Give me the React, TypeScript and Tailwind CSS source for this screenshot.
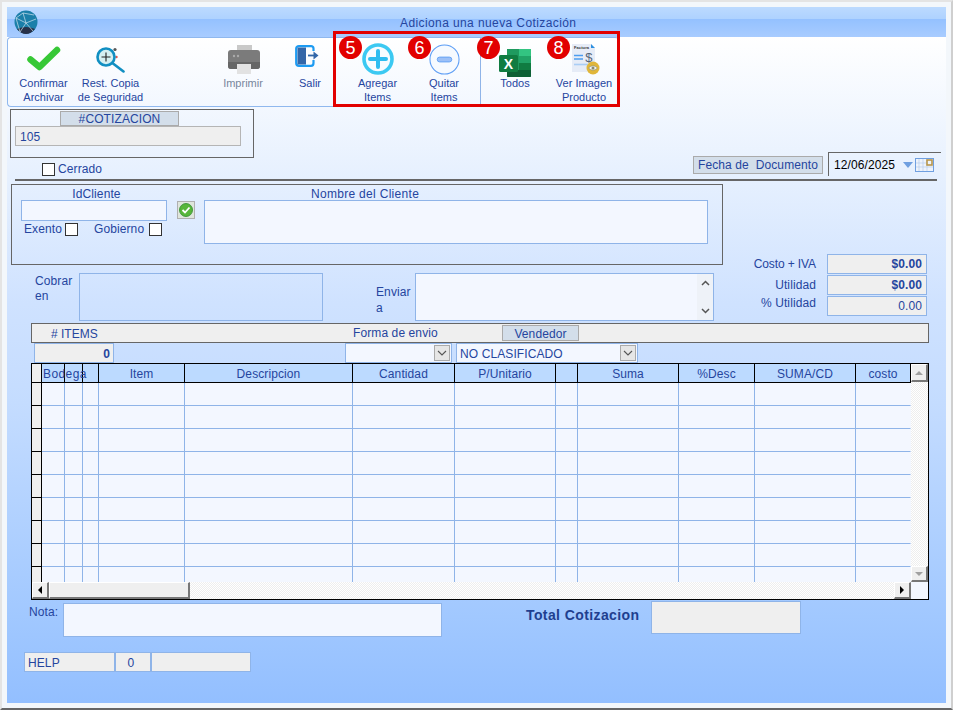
import type { ReactNode } from "react";

const columns = [
	{ w: "w-[10px]", label: "" },
	{ w: "w-[23px]", label: "Bodega" },
	{ w: "w-[18px]", label: "" },
	{ w: "w-[16px]", label: "" },
	{ w: "w-[86px]", label: "Item" },
	{ w: "w-[168px]", label: "Descripcion" },
	{ w: "w-[102px]", label: "Cantidad" },
	{ w: "w-[101px]", label: "P/Unitario" },
	{ w: "w-[22px]", label: "" },
	{ w: "w-[101px]", label: "Suma" },
	{ w: "w-[76px]", label: "%Desc" },
	{ w: "w-[101px]", label: "SUMA/CD" },
	{ w: "w-[55px]", label: "costo" },
];

const rows = [0, 1, 2, 3, 4, 5, 6, 7, 8];

function Logo() {
	return (
		<svg width="24" height="24" viewBox="0 0 24 24">
			<circle cx="12" cy="12" r="11.5" fill="#1b7fa9" />
			<path d="M3 19 Q12 15 21 19 Q17 24 12 24 Q7 24 3 19Z" fill="#27324a" />
			<path d="M2 8 L9 3 L20 5 M2 8 L12 13 L22 9 M9 3 L12 13 L6 22 M12 13 L19 21 M2 8 L6 22" stroke="#cfe3ee" strokeWidth="0.7" fill="none" />
		</svg>
	);
}

function CheckIcon() {
	return (
		<svg width="34" height="26" viewBox="0 0 34 26">
			<path d="M3.5 13.5 L12.5 21 L30 4" stroke="#37c837" strokeWidth="6.5" strokeLinecap="round" strokeLinejoin="round" fill="none" />
		</svg>
	);
}

function RestoreIcon() {
	return (
		<svg width="30" height="26" viewBox="0 0 30 26">
			<circle cx="19" cy="2.5" r="1.6" fill="#555" />
			<circle cx="20.5" cy="10" r="1.2" fill="#e0544c" />
			<circle cx="10" cy="10" r="8.5" fill="#d5f0f2" stroke="#118fc2" strokeWidth="2.6" />
			<path d="M17 16.5 L27.5 24.5" stroke="#118fc2" strokeWidth="2.6" strokeLinecap="round" />
			<path d="M10 5.5 V14.5 M5.5 10 H14.5" stroke="#222" strokeWidth="1.1" />
		</svg>
	);
}

function PrinterIcon() {
	return (
		<svg width="32" height="30" viewBox="0 0 32 30">
			<path d="M9 1 H24 V8 H9Z" fill="#c9c9c9" />
			<path d="M3 6 H29 Q32 6 32 9 V22 Q32 25 29 25 H3 Q0 25 0 22 V9 Q0 6 3 6Z" fill="#7b7b7b" />
			<path d="M0 18 H32 V22 Q32 25 29 25 H3 Q0 25 0 22Z" fill="#666" />
			<circle cx="6" cy="12" r="1.2" fill="#aaa" />
			<circle cx="10" cy="12" r="1.2" fill="#aaa" />
			<path d="M9 20 H23 V30 H9Z" fill="#e2e2e2" />
		</svg>
	);
}

function ExitIcon() {
	return (
		<svg width="24" height="22" viewBox="0 0 24 22">
			<path d="M18.5 6 V3.5 Q18.5 1.2 16 1.2 H4 Q1.2 1.2 1.2 3.5 V18 Q1.2 20.8 4 20.8 H16 Q18.5 20.8 18.5 18 V15" stroke="#1d9bf2" strokeWidth="2.2" fill="none" />
			<path d="M2.5 2.5 H11 V19.5 H2.5Z" fill="#3366a8" />
			<path d="M13 10.5 H19" stroke="#3366a8" strokeWidth="1.8" />
			<path d="M18.5 6.5 L23.5 10.5 L18.5 14.5Z" fill="#3366a8" />
		</svg>
	);
}

function PlusIcon() {
	return (
		<svg width="32" height="32" viewBox="0 0 32 32">
			<circle cx="16" cy="16" r="14" fill="#f8fcff" stroke="#3cc9f2" strokeWidth="3.6" />
			<path d="M16 8 V24 M8 16 H24" stroke="#2fbdf0" strokeWidth="4" strokeLinecap="round" />
		</svg>
	);
}

function MinusIcon() {
	return (
		<svg width="31" height="31" viewBox="0 0 32 32">
			<circle cx="16" cy="16" r="15" fill="#f6faff" stroke="#5c9df5" strokeWidth="1.1" />
			<rect x="8.5" y="13.5" width="15" height="5" rx="2.5" fill="#9cc0f7" stroke="#5c9df5" strokeWidth="0.9" />
		</svg>
	);
}

function ExcelIcon() {
	return (
		<svg width="33" height="30" viewBox="0 0 33 30">
			<path d="M8 1 H31 Q32 1 32 2 V28 Q32 29 31 29 H9 Q8 29 8 28Z" fill="#1f9a5f" />
			<path d="M20 1 H32 V8 H20Z" fill="#33c481" />
			<path d="M20 8 H32 V15 H20Z" fill="#21a366" />
			<path d="M20 15 H32 V22 H20Z" fill="#107c41" />
			<path d="M8 22 H32 V28 Q32 29 31 29 H9 Q8 29 8 28Z" fill="#0d5f35" />
			<rect x="0" y="7" width="19" height="17" rx="1.5" fill="#107c41" />
			<text x="9.5" y="20.5" textAnchor="middle" fontFamily="Liberation Sans, sans-serif" fontSize="14" fontWeight="700" fill="#fff">X</text>
		</svg>
	);
}

function InvoiceIcon() {
	return (
		<svg width="28" height="32" viewBox="0 0 28 32">
			<path d="M0 1 H19 L23 5 V29 H0Z" fill="#e6ecf7" />
			<path d="M19 1 L23 5 H19Z" fill="#2d8fe0" />
			<text x="2" y="5.5" fontFamily="Liberation Sans, sans-serif" fontSize="4" fontWeight="700" fill="#333">Factura</text>
			<text x="17" y="18.5" textAnchor="middle" fontFamily="Liberation Sans, sans-serif" fontSize="13" fill="#55657a">$</text>
			<path d="M2 12.5 H11 M2 16 H11" stroke="#4d9df0" strokeWidth="1.6" />
			<path d="M2 21.5 H16" stroke="#a9cdf5" strokeWidth="1.6" />
			<circle cx="21" cy="25" r="6.5" fill="#e0b63a" />
			<path d="M16.5 25 Q21 20.5 25.5 25 Q21 29.5 16.5 25Z" fill="#eef2f5" stroke="#8a8a6a" strokeWidth="0.6" />
			<circle cx="21" cy="25" r="1.5" fill="#8a8a6a" />
		</svg>
	);
}

function ToolButton({ icon, lines, className, iconClass, muted }: { icon?: ReactNode; lines: string[]; className: string; iconClass?: string; muted?: boolean }) {
	return (
		<div className={`flex flex-col items-center ${className}`}>
			<div className="flex h-[38px] items-start justify-center">
				<div className={iconClass}>{icon}</div>
			</div>
			{lines.map((l) => (
				<span key={l} className={`whitespace-nowrap text-[11px] leading-[14px] tracking-normal ${muted ? "text-[#77869c]" : "text-[#25459e]"}`}>
					{l}
				</span>
			))}
		</div>
	);
}

function Badge({ n, className }: { n: number; className: string }) {
	return (
		<div className={`absolute top-[34px] flex h-[23px] w-[23px] items-center justify-center rounded-full bg-[#e20000] text-[18px] leading-none text-white ${className}`}>
			{n}
		</div>
	);
}

function CheckBox() {
	return <span className="block h-[13px] w-[13px] shrink-0 border border-[#333] bg-white" />;
}

function Combo({ value, className }: { value?: string; className: string }) {
	return (
		<div className={`flex h-[20px] items-center justify-between border border-[#8fb4e8] bg-[#f3f7ff] pl-[3px] pr-[1px] text-[12px] text-[#25459e] ${className}`}>
			<span className="pt-px">{value}</span>
			<span className="flex h-[16px] w-[16px] items-center justify-center border border-[#aaa] bg-[#e6e6e6]">
				<svg width="10" height="6" viewBox="0 0 10 6">
					<path d="M1 1 L5 5 L9 1" stroke="#555" strokeWidth="1.1" fill="none" />
				</svg>
			</span>
		</div>
	);
}

const bevel = "h-full w-full border-b-2 border-l border-r-2 border-t border-b-[#777] border-l-white border-r-[#777] border-t-white bg-[#efefef]";

function ScrollButton({ dir }: { dir: "up" | "down" | "left" | "right" }) {
	const tri = {
		up: "M4 7 L8 3 L12 7Z",
		down: "M4 3 L8 7 L12 3Z",
		left: "M6 5 L10 1 L10 9Z",
		right: "M6 1 L10 5 L6 9Z",
	}[dir];
	const color = dir === "up" || dir === "down" ? "#a0a0a0" : "#000";
	return (
		<div className={`flex items-center justify-center ${bevel}`}>
			<svg width="14" height="10" viewBox="1 0 14 10">
				<path d={tri} fill={color} />
			</svg>
		</div>
	);
}

function Stat({ label, value, bold, labelClass }: { label: string; value: string; bold?: boolean; labelClass?: string }) {
	return (
		<div className="mb-px flex h-[20px] items-center justify-end gap-[11px]">
			<span className={`text-[12px] text-[#25459e] ${labelClass ?? ""}`}>{label}</span>
			<div className={`flex h-[20px] w-[100px] items-center justify-end border border-[#8fb4e8] bg-[#efefef] pr-[4px] text-[12px] text-[#25459e] ${bold ? "font-bold" : ""}`}>
				{value}
			</div>
		</div>
	);
}

export default function App() {
	return (
		<div className="relative h-[710px] w-[953px] overflow-hidden border-b-2 border-l-2 border-r-2 border-t-2 border-b-[#666] border-l-[#e4e4e4] border-r-[#cfcfcf] border-t-[#e4e4e4] bg-[#f3f7fb] p-[5px] font-['Liberation_Sans',sans-serif] tracking-[0.1px]">
			{/* barra de titulo */}
			<div className="flex h-[30px] bg-[linear-gradient(180deg,#bcdaff_0%,#aed2ff_40%,#94c1ff_40%,#a8ccff_100%)] pt-[3px]">
				<div className="ml-[7px]">
					<Logo />
				</div>
				<span className="ml-[362px] mt-[6px] text-[12px] leading-[14px] tracking-[0.4px] text-[#25459e]">Adiciona una nueva Cotización</span>
			</div>

			<div className="h-[666px] bg-[linear-gradient(180deg,#ffffff_0%,#e6f0fe_21%,#cfe2ff_40%,#c4dcff_55%,#a1c8ff_87%,#93bfff_100%)]">
				{/* toolbar */}
				<div className="flex h-[70px] w-[612px] rounded-[4px] border border-r-0 border-[#8fb8ee] pl-[2px]">
					<ToolButton className="w-[67px]" iconClass="mt-[8px]" icon={<CheckIcon />} lines={["Confirmar", "Archivar"]} />
					<ToolButton className="w-[67px]" iconClass="mt-[9px]" icon={<RestoreIcon />} lines={["Rest. Copia", "de Seguridad"]} />
					<div className="w-[66px]" />
					<ToolButton className="w-[66px]" iconClass="mt-[6px] ml-[2px]" icon={<PrinterIcon />} lines={["Imprimir"]} muted />
					<ToolButton className="w-[68px]" iconClass="mt-[7px] mr-[6px]" icon={<ExitIcon />} lines={["Salir"]} />
					<ToolButton className="w-[67px]" iconClass="mt-[5px]" icon={<PlusIcon />} lines={["Agregar", "Items"]} />
					<ToolButton className="w-[66px]" iconClass="mt-[6px]" icon={<MinusIcon />} lines={["Quitar", "Items"]} />
					<div className="ml-[3px] h-[67px] w-px bg-[#8fb4e8]" />
					<ToolButton className="w-[68px]" iconClass="mt-[10px]" icon={<ExcelIcon />} lines={["Todos"]} />
					<ToolButton className="w-[70px]" iconClass="mt-[5px] ml-[4px]" icon={<InvoiceIcon />} lines={["Ver Imagen", "Producto"]} />
				</div>

				{/* cotizacion / fecha */}
				<div className="flex items-end justify-between pl-[3px] pr-[5px]">
					<div>
						<div className="mt-[2px] h-[49px] w-[244px] border border-[#666]">
							<div className="ml-[49px] mt-px flex h-[15px] w-[119px] items-center justify-center border border-[#aaa] bg-[#d3deea] text-[12px] text-[#25459e]">#COTIZACION</div>
							<div className="ml-[4px] flex h-[20px] w-[226px] items-center border border-[#b5b5b5] bg-[#efefef] pl-[4px] pt-[2px] text-[12px] text-[#25459e]">105</div>
						</div>
						<div className="ml-[32px] mt-[4px] flex h-[14px] items-center gap-[3px]">
							<CheckBox />
							<span className="text-[12px] text-[#25459e]">Cerrado</span>
						</div>
					</div>
					<div className="flex items-end gap-[5px]">
						<div className="mb-[2px] flex h-[18px] w-[130px] items-center justify-center whitespace-pre border border-[#aaa] bg-[#d3deea] text-[12px] text-[#25459e]">Fecha de  Documento</div>
						<div className="flex h-[24px] w-[113px] items-center border-l border-t border-b-white border-r-white border-l-[#666] border-t-[#666] pl-[5px]">
							<span className="text-[12px] text-black">12/06/2025</span>
							<svg className="ml-[7px]" width="12" height="8" viewBox="0 0 12 8">
								<path d="M1 1 H11 L6 7Z" fill="#6f9fe0" />
							</svg>
							<svg className="ml-px" width="19" height="14" viewBox="0 0 19 14">
								<rect x="0.5" y="0.5" width="18" height="13" fill="#eef3fb" stroke="#6f9fe0" />
								<path d="M4 1 V13 M8 1 V13 M12 1 V13 M1 5 H18 M1 9 H18" stroke="#b8cdec" strokeWidth="0.7" />
								<rect x="12" y="2" width="5" height="5" fill="#eef3fb" stroke="#b8964a" strokeWidth="1.6" />
							</svg>
						</div>
					</div>
				</div>
				<div className="ml-[8px] mt-[3px] h-[2px] w-[922px] bg-[#666]" />

				{/* cliente + totales */}
				<div className="mt-[3px] flex">
					<div className="ml-[4px] w-[712px]">
						<div className="flex h-[81px] border border-[#666] pl-[9px]">
							<div className="w-[146px]">
								<div className="h-[15px] pl-[5px] text-center text-[12px] leading-[19px] text-[#25459e]">IdCliente</div>
								<div className="h-[21px] border border-[#8fb4e8] bg-[#f3f7ff]" />
								<div className="ml-[3px] mt-px flex h-[14px] items-center text-[12px] text-[#25459e]">
									<span className="w-[41px]">Exento</span>
									<CheckBox />
									<span className="ml-[16px] w-[55px]">Gobierno</span>
									<CheckBox />
								</div>
							</div>
							<div className="ml-[10px] mt-[16px] flex h-[18px] w-[18px] items-center justify-center border border-[#b0b0b0] bg-[#dfe6dc]">
								<svg width="14" height="14" viewBox="0 0 14 14">
									<circle cx="7" cy="7" r="6.5" fill="#57b63a" stroke="#2f8a2c" strokeWidth="0.8" />
									<path d="M3.5 7 L6 9.5 L10.5 4.5" stroke="#fff" strokeWidth="1.8" fill="none" />
								</svg>
							</div>
							<div className="ml-[9px] w-[504px]">
								<div className="h-[15px] pl-[107px] text-[12px] leading-[19px] tracking-[0.3px] text-[#25459e]">Nombre del Cliente</div>
								<div className="h-[44px] border border-[#8fb4e8] bg-[#f3f7ff]" />
							</div>
						</div>
						<div className="mt-[8px] flex">
							<div className="ml-[24px] w-[44px] pt-px text-[12px] leading-[15px] text-[#25459e]">
								Cobrar
								<br />
								en
							</div>
							<div className="h-[48px] w-[244px] border border-[#8fb4e8]" />
							<div className="ml-[53px] w-[39px] pt-[11px] text-[12px] leading-[16px] text-[#25459e]">
								Enviar
								<br />a
							</div>
							<div className="flex h-[48px] w-[299px] justify-end border border-[#8fb4e8] bg-[#f3f7ff]">
								<div className="flex w-[16px] flex-col items-center justify-between bg-[#eef2f8] py-[6px]">
									<svg width="9" height="6" viewBox="0 0 9 6">
										<path d="M1 5 L4.5 1.5 L8 5" stroke="#555" strokeWidth="1.5" fill="none" />
									</svg>
									<svg width="9" height="6" viewBox="0 0 9 6">
										<path d="M1 1 L4.5 4.5 L8 1" stroke="#555" strokeWidth="1.5" fill="none" />
									</svg>
								</div>
							</div>
						</div>
					</div>
					<div className="mt-[70px] w-[204px]">
						<Stat label="Costo + IVA" value="$0.00" bold labelClass="tracking-[-0.1px]" />
						<Stat label="Utilidad" value="$0.00" bold />
						<Stat label="% Utilidad" value="0.00" labelClass="mb-[6px]" />
					</div>
				</div>

				{/* items */}
				<div className="ml-[24px] mt-[2px] flex h-[20px] w-[898px] items-center border border-[#666] bg-[#efefef] text-[12px] text-[#25459e]">
					<span className="w-[321px] pl-[19px] pt-px tracking-normal"># ITEMS</span>
					<span className="w-[149px]">Forma de envio</span>
					<span className="flex h-[16px] w-[77px] items-center justify-center border border-[#aaa] bg-[#d3deea] pt-px">Vendedor</span>
				</div>
				<div className="ml-[27px] flex h-[20px]">
					<div className="flex w-[80px] items-center justify-end border border-[#8fb4e8] bg-[#efefef] pr-[3px] pt-px text-[12px] font-bold text-[#25459e]">0</div>
					<Combo className="ml-[231px] w-[107px]" />
					<Combo className="ml-[4px] w-[182px]" value="NO CLASIFICADO" />
				</div>

				{/* grilla */}
				<div className="ml-[24px] h-[237px] w-[898px] border border-black bg-[#f3f7ff]">
					<div className="flex h-[218px]">
						<div className="w-[879px] overflow-hidden">
							<div className="flex h-[19px]">
								{columns.map((c, i) => (
									<div
										key={i}
										className={`flex shrink-0 items-center whitespace-nowrap border-b border-r border-black pt-[2px] text-[12px] text-[#25459e] ${c.w} ${i === 0 ? "bg-[#efefef]" : "bg-[#bcdaff]"} ${i === 1 ? "relative z-10 justify-start pl-px tracking-[0.4px]" : "justify-center"}`}
									>
										{c.label}
									</div>
								))}
							</div>
							{rows.map((r) => (
								<div key={r} className="flex h-[23px]">
									{columns.map((c, i) => (
										<div key={i} className={`shrink-0 border-b border-r ${c.w} ${i === 0 ? "border-black bg-[#efefef]" : "border-[#8fb4e8]"} ${i === 12 ? "border-r-transparent" : ""}`} />
									))}
								</div>
							))}
						</div>
						<div className="flex w-[17px] flex-col bg-[repeating-conic-gradient(#eeeeee_0_25%,#ffffff_0_50%)] bg-[length:2px_2px]">
							<div className="h-[18px]">
								<ScrollButton dir="up" />
							</div>
							<div className="flex-1" />
							<div className="h-[16px]">
								<ScrollButton dir="down" />
							</div>
						</div>
					</div>
					<div className="flex h-[17px]">
						<div className="flex w-[879px] bg-[repeating-conic-gradient(#eeeeee_0_25%,#ffffff_0_50%)] bg-[length:2px_2px]">
							<div className="w-[17px]">
								<ScrollButton dir="left" />
							</div>
							<div className="w-[141px]">
								<div className={bevel} />
							</div>
							<div className="flex-1" />
							<div className="w-[17px]">
								<ScrollButton dir="right" />
							</div>
						</div>
					</div>
				</div>

				{/* nota y total */}
				<div className="mt-px flex h-[36px] items-start">
					<span className="ml-[22px] mt-[2px] w-[34px] text-[12px] text-[#25459e]">Nota:</span>
					<div className="mt-[2px] h-[34px] w-[379px] border border-[#8fb4e8] bg-[#f3f7ff]" />
					<span className="ml-[84px] mt-[4px] w-[125px] whitespace-nowrap text-[14px] font-bold tracking-[0.4px] text-[#1f3f8f]">Total Cotizacion</span>
					<div className="h-[33px] w-[150px] border border-[#8fb4e8] bg-[#efefef]" />
				</div>
				<div className="ml-[17px] mt-[15px] flex h-[20px] text-[12px] text-[#25459e]">
					<div className="flex w-[91px] items-center border border-[#8fb4e8] bg-[#efefef] pl-[3px] pt-px">HELP</div>
					<div className="flex w-[36px] items-center justify-center border border-[#8fb4e8] bg-[#efefef] pr-[4px] pt-px">0</div>
					<div className="w-[100px] border border-[#8fb4e8] bg-[#efefef]" />
				</div>
			</div>

			{/* recuadro rojo con numeros */}
			<div className="absolute left-[331px] top-[29px] h-[76px] w-[287px] border-[3px] border-[#e20000]" />
			<Badge n={5} className="left-[337px]" />
			<Badge n={6} className="left-[406px]" />
			<Badge n={7} className="left-[475px]" />
			<Badge n={8} className="left-[545px]" />
		</div>
	);
}
